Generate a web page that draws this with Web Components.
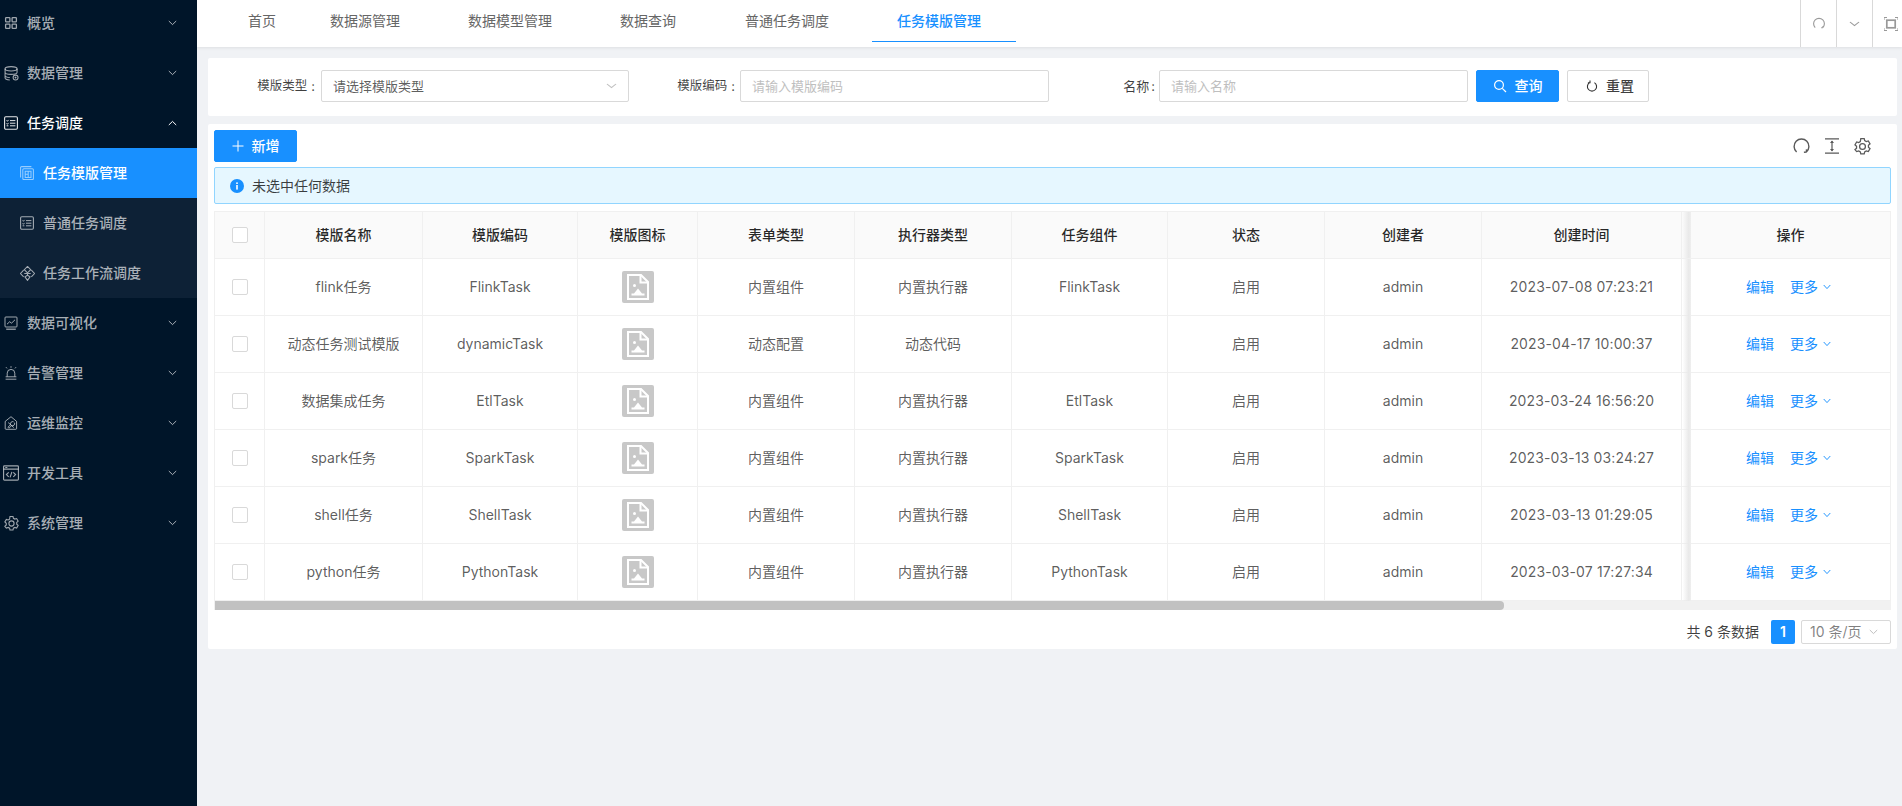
<!DOCTYPE html>
<html lang="zh"><head><meta charset="utf-8"><title>任务模版管理</title>
<style>
html,body{margin:0;height:100%;}
body{font:14px/22px Inter,"Noto Sans CJK SC",sans-serif;background:#f0f2f5;overflow:hidden;}
</style></head><body>
<x-app>
  <x-sidebar slot="side">
    <x-menu icon="grid" label="概览"></x-menu>
    <x-menu icon="db" label="数据管理"></x-menu>
    <x-menu icon="task" label="任务调度" open></x-menu>
    <x-submenu>
      <x-menu sub active icon="tpl" label="任务模版管理"></x-menu>
      <x-menu sub icon="task" label="普通任务调度"></x-menu>
      <x-menu sub icon="flow" label="任务工作流调度"></x-menu>
    </x-submenu>
    <x-menu icon="chart" label="数据可视化"></x-menu>
    <x-menu icon="alarm" label="告警管理"></x-menu>
    <x-menu icon="ops" label="运维监控"></x-menu>
    <x-menu icon="code" label="开发工具"></x-menu>
    <x-menu icon="gear" label="系统管理"></x-menu>
  </x-sidebar>
  <x-tabbar slot="head"></x-tabbar>
  <x-search slot="main"></x-search>
  <x-panel slot="main"></x-panel>
</x-app>
<script>
const I={
grid:'<g stroke-width="1.3"><rect x="1.6" y="1.6" width="4.3" height="4.3" rx=".7"/><rect x="8.1" y="1.6" width="4.3" height="4.3" rx=".7"/><rect x="1.6" y="8.1" width="4.3" height="4.3" rx=".7"/><rect x="8.1" y="8.1" width="4.3" height="4.3" rx=".7"/></g>',
db:'<ellipse cx="6.6" cy="2.6" rx="5.6" ry="2"/><path d="M1 2.6v8.4c0 1.1 2 1.9 4.4 2M1 5.8c0 1.1 2.4 2 5.6 2s5.6-.9 5.6-2V2.6M1 8.8c0 1 1.9 1.8 4.4 2"/><circle cx="10.8" cy="10.8" r="2.3"/><path d="M10.8 9.8v2M9.8 10.8h2" stroke-width=".7"/>',
task:'<rect x=".6" y=".8" width="12.8" height="12.4" rx="1.2" stroke-width="1.1"/><path d="M6 4.6h5.4M6 7.2h5.4M6 9.8h5.4M2.6 4.4l.8.9 1.1-1.4M2.6 7.4l.8.9 1.1-1.4M2.6 9.8h1.8"/>',
tpl:'<g stroke-width="1.05"><rect x="2.8" y="2.8" width="10.6" height="10.8" rx="1"/><path d="M.6 11.4V1.6a1 1 0 0 1 1-1h9.8"/><path d="M5.2 5.2h5.8v6.2H5.2zM8.2 5.2v6.2M5.2 8.2h3"/></g>',
flow:'<path d="M7 .4l3 3-3 3-3-3zM3.4 3.8L.4 7l3 3.2M10.6 3.8L13.6 7l-3 3.2M4 7h6M7 6.4v2.2M4.6 10.2L7 8.6l2.4 1.6L7 13.4z"/>',
chart:'<rect x="1" y="1" width="12" height="10" rx=".8"/><path d="M3 8.2l2.6-2.4 2 1.3L11 3.8"/><path d="M2.2 13.2h9.6" stroke-width="1.3"/>',
alarm:'<path d="M3.2 10.6V7.2a3.8 3.8 0 0 1 7.6 0v3.4M1.6 10.8h10.8M1.6 13.2h10.8M7 .2v1.6M2 1.2l1 1.2M12 1.2l-1 1.2"/>',
ops:'<path d="M7 .7L1.2 5.4v7.1a.8.8 0 0 0 .8.8h9.8a.8.8 0 0 0 .8-.8V5.4zM4.2 6.6l5.6 5M9.6 5.8a2.2 2.2 0 0 0-3 2.8L4 11.2l1 1 2.6-2.6a2.2 2.2 0 0 0 2.9-2.9"/>',
code:'<rect x=".5" y=".8" width="13" height="12.4" rx=".8"/><path d="M.5 3.6h13M5 6.4L3 8.4l2 2M9 6.4l2 2-2 2M7.8 6l-1.6 4.8M2 2.2h1.8"/>',
gear:'<path d="M5.6.7h2.8l.4 1.7 1.3.7 1.7-.5 1.4 2.4-1.3 1.2v1.6l1.3 1.2-1.4 2.4-1.7-.5-1.3.7-.4 1.7H5.6l-.4-1.7-1.3-.7-1.7.5L.8 9.8l1.3-1.2V7L.8 5.8 2.2 3.4l1.7.5 1.3-.7z" transform="translate(0 -.2)" stroke-width="1.05"/><circle cx="7" cy="7" r="2.4" stroke-width="1.05"/>'};
const SZ={code:16,gear:15,db:15,flow:15};
const svg=(n)=>{const s=SZ[n]||14;return `<svg width="${s}" height="${s}" viewBox="0 0 14 14" fill="none" stroke="currentColor" stroke-width="1" style="margin:${(14-s)/2}px">${I[n]}</svg>`};
const def=(n,f)=>customElements.define(n,class extends HTMLElement{connectedCallback(){if(!this.shadowRoot){this.attachShadow({mode:'open'}).innerHTML=f(this);}}});
const chev=(up,c='currentColor',w=9)=>`<svg width="${w}" height="6" viewBox="0 0 9 6" preserveAspectRatio="none" fill="none" stroke="${c}" stroke-width="1"><path d="${up?'M.8 5L4.5 1.4 8.2 5':'M.8 1L4.5 4.6 8.2 1'}"/></svg>`;

def('x-app',()=>`<style>:host{display:flex;height:806px;width:1902px}
.r{flex:1;min-width:0;display:flex;flex-direction:column}
.m{flex:1;display:flex;flex-direction:column;gap:8px;padding:11px 5px 0 11px}</style>
<slot name="side"></slot><div class="r"><slot name="head"></slot><div class="m"><slot name="main"></slot></div></div>`);

def('x-sidebar',()=>`<style>:host{display:block;width:197px;height:806px;overflow:hidden;background:#001529;flex:none}
.s{margin-top:-2px}</style><div class="s"><slot></slot></div>`);

def('x-submenu',()=>`<style>:host{display:block;background:#0d2136}</style><slot></slot>`);

def('x-menu',h=>{const sub=h.hasAttribute('sub'),act=h.hasAttribute('active'),open=h.hasAttribute('open');
return `<style>:host{display:flex;align-items:center;height:50px;color:${act||open?'#fff':'rgba(255,255,255,.66)'};background:${act?'#1890ff':'transparent'};padding-left:${sub?20:4}px;font-weight:500}
svg{flex:none}.i{display:flex;width:14px;height:14px;opacity:${act?.55:open?.9:.95}}
.t{margin-left:9px;flex:1;white-space:nowrap}.c{display:flex;margin-right:20px}</style>
<span class="i">${svg(h.getAttribute('icon'))}</span><span class="t">${h.getAttribute('label')}</span>${sub?'':`<span class="c">${chev(open)}</span>`}`});

def('x-tabbar',()=>{const T=[['首页',31,20],['数据源管理',34,34],['数据模型管理',34,34],['数据查询',34,35],['普通任务调度',34,35],['任务模版管理',25,35,1]];
return `<style>:host{display:flex;height:47px;background:#fff;box-shadow:0 1px 3px rgba(0,0,0,.08);position:relative;align-items:stretch}
.tabs{display:flex;flex:1;padding-left:20px}
.t{display:flex;align-items:center;height:41px;box-sizing:content-box;color:#666;white-space:nowrap;border-bottom:1px solid transparent}
.a{color:#1890ff;border-bottom-color:#1890ff;font-weight:500;margin-left:8px}
.b{width:35px;border-left:1px solid #d9d9d9;display:flex;align-items:center;justify-content:center;color:#999}
.l{width:30px;justify-content:flex-start;padding-left:11px;box-sizing:border-box}</style>
<div class="tabs">${T.map(t=>`<div class="t ${t[3]?'a':''}" style="padding:0 ${t[2]}px 0 ${t[1]}px">${t[0]}</div>`).join('')}</div>
<div class="b"><svg width="14" height="14" viewBox="0 0 14 14" fill="none" stroke="#999" stroke-width="1.1"><path d="M3.2 10.6A5.4 5.4 0 1 1 10.8 10.6M10.8 10.6l.2-1.6M10.8 10.6l-1.6.1"/></svg></div>
<div class="b">${chev(false,'#999',11)}</div>
<div class="b l"><svg width="14" height="14" viewBox="0 0 14 14" fill="none" stroke="#999"><path d="M0 3V.5h3M11 .5h3V3M14 11v2.5h-3M3 13.5H0V11"/><rect x="2.8" y="3.2" width="8.4" height="7.6" stroke-width="1.7"/></svg></div>`});

def('x-field',h=>{const sel=h.hasAttribute('select'),bw=h.getAttribute('bw')||308;return `<style>:host{display:flex;align-items:center;justify-content:flex-end;width:420px;height:32px;flex:none}
.l{color:rgba(0,0,0,.75);white-space:nowrap;font-size:${h.getAttribute('fs')||12.5}px}
.k{margin:0 ${h.getAttribute('kr')||6}px 0 ${h.getAttribute('kl')||4}px;font-size:13px;color:rgba(0,0,0,.75)}
.box{width:${bw}px;height:32px;box-sizing:border-box;border:1px solid #d9d9d9;border-radius:2px;display:flex;align-items:center;justify-content:space-between;padding:0 11px;flex:none;font-size:13px;color:${sel?'rgba(0,0,0,.65)':'#bfbfbf'}}</style>
<span class="l">${h.getAttribute('label')}</span><span class="k">:</span><div class="box"><span>${h.getAttribute('ph')}</span>${sel?chev(false,'#bfbfbf',11):''}</div>`});

def('x-btn',h=>{const p=h.hasAttribute('primary');return `<style>:host{display:inline-flex;align-items:center;justify-content:center;gap:8px;width:${h.getAttribute('w')}px;height:32px;box-sizing:border-box;border-radius:2px;flex:none;background:${p?'#1890ff':'#fff'};color:${p?'#fff':'rgba(0,0,0,.75)'};border:1px solid ${p?'#1890ff':'#d9d9d9'};font-weight:500}
svg{display:block}</style><slot></slot>`});

def('x-search',()=>`<style>:host{display:flex;align-items:center;height:58px;box-sizing:border-box;background:#fff;padding:0 0 2px 1px;flex:none;border-radius:2px}
x-btn{margin-left:8px}</style>
<x-field select label="模版类型" ph="请选择模版类型"></x-field><x-field bw="309" kr="5" label="模版编码" ph="请输入模版编码"></x-field><x-field style="width:419px" bw="309" fs="13" kl="2" kr="4" label="名称" ph="请输入名称"></x-field>
<x-btn primary w="83"><svg width="14" height="14" viewBox="0 0 14 14" fill="none" stroke="#fff" stroke-width="1.2"><circle cx="6" cy="6" r="4.4"/><path d="M9.3 9.3L13 13"/></svg>查询</x-btn>
<x-btn w="82" style="padding-left:4px"><svg width="12" height="12" viewBox="0 0 12 12" fill="none" stroke="#333" stroke-width="1.1"><path d="M3.6 2.6a4.6 4.6 0 1 0 4.8 0M4 .6v2.2H1.9"/></svg>重置</x-btn>`);

def('x-alert',()=>`<style>:host{display:flex;align-items:center;height:37px;box-sizing:border-box;border:1px solid #91d5ff;background:#e6f7ff;border-radius:2px;padding-left:15px;color:rgba(0,0,0,.75);flex:none}
svg{margin-right:8px}</style><svg width="14" height="14" viewBox="0 0 14 14"><circle cx="7" cy="7" r="7" fill="#1890ff"/><rect x="6.2" y="6" width="1.6" height="4.6" fill="#fff"/><rect x="6.2" y="3.4" width="1.6" height="1.6" fill="#fff"/></svg>未选中任何数据`);

const COLS='50px 158px 155px 120px 157px 157px 156px 157px 157px 200px 9px 200px';
def('x-row',h=>{const head=h.hasAttribute('head');const cells=JSON.parse(h.dataset.c);
return `<style>:host{display:grid;grid-template-columns:${COLS};height:${head?47:57}px;box-sizing:border-box;border-bottom:1px solid #f0f0f0;background:${head?'#fafafa':'#fff'};color:${head?'rgba(0,0,0,.85)':'rgba(0,0,0,.65)'};font-weight:${head?500:400}}
.c{display:flex;align-items:center;justify-content:center;border-right:1px solid #f0f0f0;white-space:nowrap;min-width:0}
.d{letter-spacing:.13px}
.ck{width:16px;height:16px;box-sizing:border-box;border:1px solid #d9d9d9;border-radius:2px;background:#fff}
.s{background:linear-gradient(90deg,#fff0 5%,#e9e9e9 75%,#efefef);border-right:0;margin-bottom:${head?0:-1}px}
.o{background:${head?'#fafafa':'#fff'};${head?'':'gap:16px;padding-right:4px'}}
a{color:#1890ff;display:inline-flex;align-items:center;gap:5px}.img{width:32px;height:32px;display:block}</style>
<div class="c"><span class="ck"></span></div>
${cells.map((t,i)=>`<div class="c ${i==8&&!head?'d':''}">${t==='#'?`<svg class="img" viewBox="0 0 32 32"><rect width="32" height="32" rx="2" fill="#c8c8c8"/><path d="M6 4h13l7 7v17H6z" fill="none" stroke="#fff" stroke-width="2"/><path d="M18.5 4v7.5H26" fill="none" stroke="#fff" stroke-width="2"/><path d="M9.5 24.5v-2h2.5l4-5 4 5h2.5v2z" fill="#fff"/><circle cx="12.5" cy="14.5" r="1.5" fill="#fff"/></svg>`:t}</div>`).join('')}
<div class="c s"></div>
<div class="c o">${head?'操作':`<a>编辑</a><a>更多${chev(false,'#1890ff',8)}</a>`}</div>`});

const rows=[['flink任务','FlinkTask','内置组件','内置执行器','FlinkTask','2023-07-08 07:23:21'],
['动态任务测试模版','dynamicTask','动态配置','动态代码','','2023-04-17 10:00:37'],
['数据集成任务','EtlTask','内置组件','内置执行器','EtlTask','2023-03-24 16:56:20'],
['spark任务','SparkTask','内置组件','内置执行器','SparkTask','2023-03-13 03:24:27'],
['shell任务','ShellTask','内置组件','内置执行器','ShellTask','2023-03-13 01:29:05'],
['python任务','PythonTask','内置组件','内置执行器','PythonTask','2023-03-07 17:27:34']];
const esc=o=>JSON.stringify(o).replace(/"/g,'&quot;');
def('x-table',()=>`<style>:host{display:block;border:solid #f0f0f0;border-width:1px 0 0 1px;margin-top:7px;width:1677px;box-sizing:border-box;flex:none}
.sb{height:9px;background:#f1f1f1;position:relative}.th{position:absolute;left:0;top:0;bottom:0;width:1289px;background:#c1c1c1;border-radius:0 4px 4px 0}</style>
<x-row head data-c="${esc(['模版名称','模版编码','模版图标','表单类型','执行器类型','任务组件','状态','创建者','创建时间'])}"></x-row>
${rows.map(r=>`<x-row data-c="${esc([r[0],r[1],'#',r[2],r[3],r[4],'启用','admin',r[5]])}"></x-row>`).join('')}
<div class="sb"><div class="th"></div></div>`);

def('x-panel',()=>`<style>:host{display:flex;flex-direction:column;background:#fff;height:525px;padding:6px 6px 0;box-sizing:border-box;flex:none;border-radius:2px}
.top{display:flex;justify-content:space-between;align-items:center;height:32px;margin-bottom:5px;flex:none}
.ic{display:flex;align-items:center;gap:15px;padding-right:20px;color:#595959}
.pg{display:flex;align-items:center;justify-content:flex-end;margin-top:10px;height:24px;color:rgba(0,0,0,.75)}
.n{width:24px;height:24px;background:#1890ff;color:#fff;font-weight:600;display:flex;align-items:center;justify-content:center;border-radius:2px;margin:0 6px 0 12px}
.ps{width:90px;height:24px;box-sizing:border-box;border:1px solid #d9d9d9;border-radius:2px;display:flex;align-items:center;justify-content:space-between;padding:0 12px 0 8px;color:rgba(0,0,0,.5)}</style>
<div class="top"><x-btn primary w="83"><svg width="12" height="12" viewBox="0 0 12 12" stroke="#fff" fill="none"><path d="M6 .5v11M.5 6h11"/></svg>新增</x-btn>
<div class="ic"><svg width="17" height="17" viewBox="0 0 17 17" fill="none" stroke="currentColor" stroke-width="1.4"><path d="M3.6 14A7.4 7.4 0 1 1 13.4 14M13.4 14l.1-2.6M13.4 14l-2.5.2"/></svg>
<svg width="14" height="16" viewBox="0 0 14 16" fill="none" stroke="currentColor" stroke-width="1.2"><path d="M0 .8h14M0 15.2h14M7 3v10"/><path d="M5 5l2-2.4L9 5zM5 11l2 2.4L9 11z" fill="currentColor" stroke="none"/></svg>
<svg width="17" height="17" viewBox="0 0 14 14" fill="none" stroke="currentColor" stroke-width="1">${I.gear}</svg></div></div>
<x-alert></x-alert><x-table></x-table>
<div class="pg">共 6 条数据<span class="n">1</span><span class="ps">10 条/页${chev(false,'#bfbfbf',9)}</span></div>`);
</script>
</body></html>
